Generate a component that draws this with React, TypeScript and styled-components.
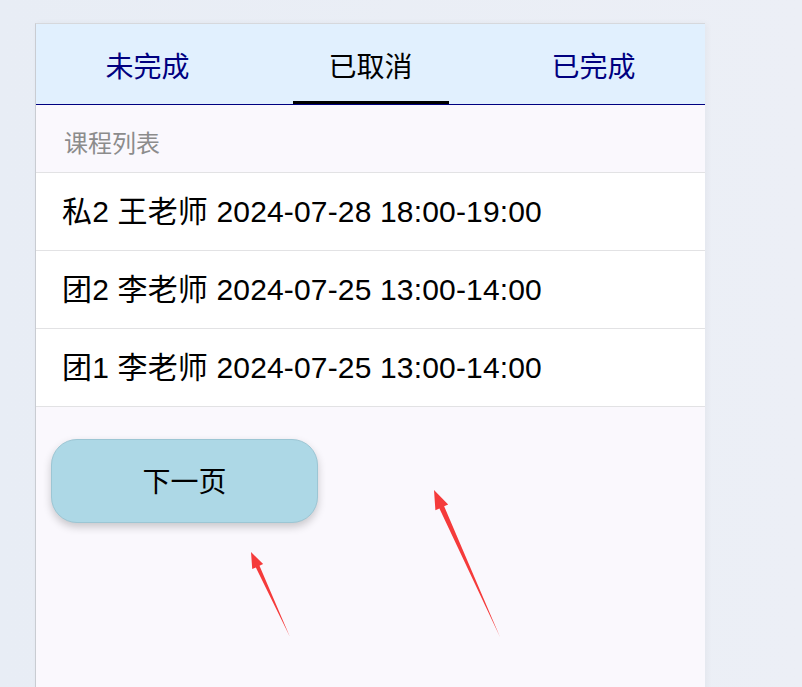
import styled, { createGlobalStyle } from 'styled-components'

const GlobalStyle = createGlobalStyle`
  html, body {
    margin: 0;
    padding: 0;
    background: #e9eef6;
    font-family: 'Liberation Sans', Arial, 'Noto Sans CJK SC', sans-serif;
  }
`

const tabs = ['未完成', '已取消', '已完成']
const ACTIVE = 1

const courses = [
  '私2 王老师 2024-07-28 18:00-19:00',
  '团2 李老师 2024-07-25 13:00-14:00',
  '团1 李老师 2024-07-25 13:00-14:00',
]

// annotation arrows from the screenshot: tail -> tip
const arrows = [
  { tail: [290, 637], tip: [251, 552], head: 16, wing: 6, shaft: 2 },
  { tail: [500, 637], tip: [434, 490], head: 19, wing: 7, shaft: 2.6 },
]

function arrowPoints({ tail, tip, head, wing, shaft }: (typeof arrows)[number]) {
  const dx = tip[0] - tail[0]
  const dy = tip[1] - tail[1]
  const len = Math.hypot(dx, dy)
  const ux = dx / len
  const uy = dy / len
  const nx = -uy
  const ny = ux
  const bx = tip[0] - ux * head
  const by = tip[1] - uy * head
  const pts = [
    [tip[0], tip[1]],
    [bx + nx * wing, by + ny * wing],
    [bx + nx * shaft, by + ny * shaft],
    [tail[0], tail[1]],
    [bx - nx * shaft, by - ny * shaft],
    [bx - nx * wing, by - ny * wing],
  ]
  return pts.map(p => p.join(',')).join(' ')
}

function App() {
  return (
    <Page>
      <GlobalStyle />
      <Panel>
        <TabBar>
          {tabs.map((t, i) => (
            <Tab key={t} $active={i === ACTIVE}>
              {t}
            </Tab>
          ))}
        </TabBar>
        <ListTitle>课程列表</ListTitle>
        <List>
          {courses.map(c => (
            <Row key={c}>{c}</Row>
          ))}
        </List>
        <NextButton>下一页</NextButton>
      </Panel>
      <Annotations width="802" height="687" viewBox="0 0 802 687">
        {arrows.map((a, i) => (
          <polygon key={i} points={arrowPoints(a)} fill="#f53b3b" />
        ))}
      </Annotations>
    </Page>
  )
}

export default App

const Page = styled.div`
  position: relative;
  width: 802px;
  height: 687px;
  overflow: hidden;
  padding-top: 23px;
  padding-left: 35px;
  box-sizing: border-box;
  background: linear-gradient(90deg, #e8edf5 0%, #eceff6 100%);
`

const Panel = styled.div`
  width: 669px;
  min-height: 680px;
  background: #faf8fd;
  border-top: 1px solid #d6d8dc;
  border-left: 1px solid #c9ccd2;
  box-shadow: 2px 0 6px rgba(0, 0, 0, 0.04);
`

const TabBar = styled.div`
  display: grid;
  grid-template-columns: repeat(3, 1fr);
  height: 80px;
  background: #e1f0fe;
  border-bottom: 1px solid #000080;
`

const Tab = styled.div<{ $active: boolean }>`
  position: relative;
  display: flex;
  align-items: center;
  justify-content: center;
  font-size: 28px;
  padding-top: 2px;
  color: ${p => (p.$active ? '#000' : '#000080')};
  &::after {
    content: '';
    display: ${p => (p.$active ? 'block' : 'none')};
    position: absolute;
    bottom: 0;
    left: 50%;
    width: 156px;
    margin-left: -78px;
    height: 3px;
    background: #000;
  }
`

const ListTitle = styled.div`
  height: 68px;
  display: flex;
  align-items: center;
  padding-left: 28px;
  padding-top: 5px;
  box-sizing: border-box;
  font-size: 24px;
  color: #8c8c8c;
  border-bottom: 1px solid #e2e2e4;
`

const List = styled.div`
  display: flex;
  flex-direction: column;
  background: #fff;
`

const Row = styled.div`
  display: flex;
  align-items: center;
  padding-left: 26px;
  padding-bottom: 5px;
  height: 72px;
  font-size: 30px;
  letter-spacing: 0.16px;
  color: #000;
  border-bottom: 1px solid #e2e2e4;
`

const NextButton = styled.button`
  display: flex;
  align-items: center;
  justify-content: center;
  margin: 32px 0 0 15px;
  width: 267px;
  height: 84px;
  padding-bottom: 3px;
  border: 1px solid #9cc6d4;
  border-radius: 26px;
  background: #add8e6;
  box-shadow: 0 4px 8px rgba(0, 0, 0, 0.2);
  font-family: inherit;
  font-size: 28px;
  color: #000;
  cursor: pointer;
`

const Annotations = styled.svg`
  position: absolute;
  top: 0;
  left: 0;
  pointer-events: none;
`
